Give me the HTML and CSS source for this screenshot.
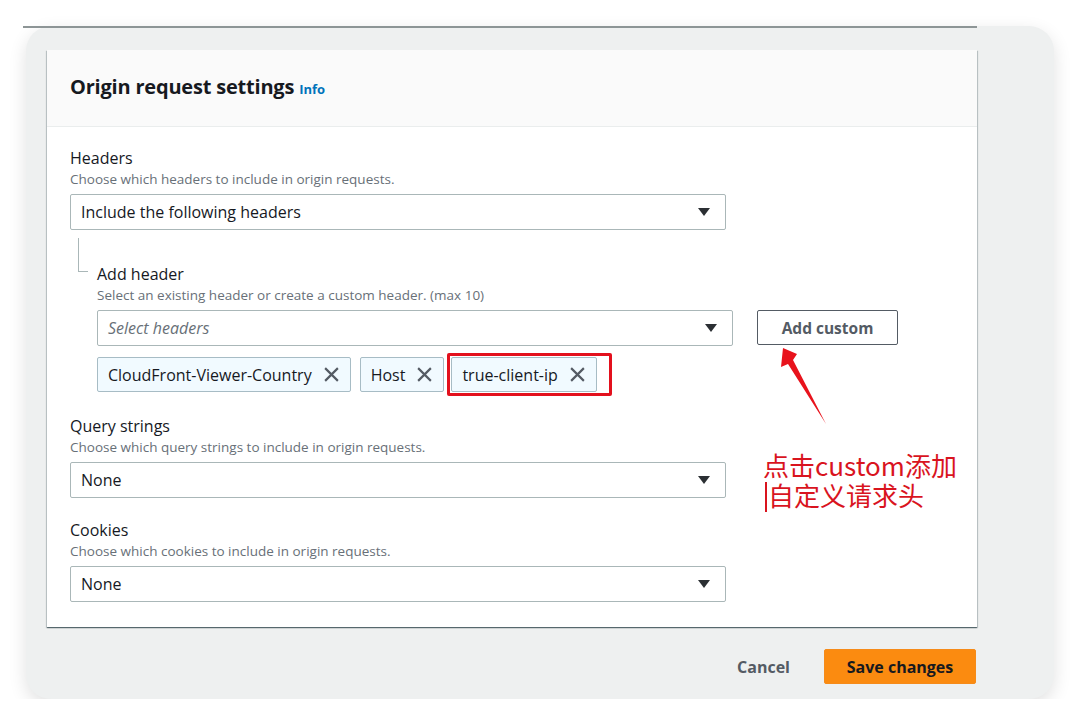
FILE: index.html
```html
<!DOCTYPE html>
<html lang="en">
<head>
    <meta charset="UTF-8">
    <title>Origin request settings</title>
    <link rel="stylesheet" href="styles.css">
</head>
<body>
    <div class="frame">
        <div class="prev-edge"></div>
        <div class="panel">
            <div class="panel-header">
                <h2>Origin request settings <a class="info-link" href="#">Info</a></h2>
            </div>
            <div class="panel-body">
                <div class="field">
                    <div class="field-label">Headers</div>
                    <div class="field-desc">Choose which headers to include in origin requests.</div>
                    <div class="select">
                        <span>Include the following headers</span>
                        <span class="caret"></span>
                    </div>
                    <div class="subsection">
                        <div class="connector"></div>
                        <div class="sub-content">
                            <div class="field-label">Add header</div>
                            <div class="field-desc">Select an existing header or create a custom header. (max 10)</div>
                            <div class="select-row">
                                <div class="select wide">
                                    <span class="placeholder">Select headers</span>
                                    <span class="caret"></span>
                                </div>
                                <button class="btn-normal">Add custom</button>
                            </div>
                            <div class="tokens">
                                <div class="token">CloudFront-Viewer-Country
                                    <svg class="dismiss" viewBox="0 0 16 16"><path d="M2 2 14 14M14 2 2 14"/></svg>
                                </div>
                                <div class="token">Host
                                    <svg class="dismiss" viewBox="0 0 16 16"><path d="M2 2 14 14M14 2 2 14"/></svg>
                                </div>
                                <div class="highlight">
                                    <div class="token">true-client-ip
                                        <svg class="dismiss" viewBox="0 0 16 16"><path d="M2 2 14 14M14 2 2 14"/></svg>
                                    </div>
                                </div>
                            </div>
                        </div>
                    </div>
                </div>
                <div class="field">
                    <div class="field-label">Query strings</div>
                    <div class="field-desc">Choose which query strings to include in origin requests.</div>
                    <div class="select">
                        <span>None</span>
                        <span class="caret"></span>
                    </div>
                </div>
                <div class="field">
                    <div class="field-label">Cookies</div>
                    <div class="field-desc">Choose which cookies to include in origin requests.</div>
                    <div class="select">
                        <span>None</span>
                        <span class="caret"></span>
                    </div>
                </div>

                <!-- screenshot annotation -->
                <svg class="note-arrow" viewBox="0 0 60 84" width="60" height="84">
                    <polygon points="8,3 22,9 18,15 51,79 13,19 6,22"/>
                </svg>
                <div class="note">
                    <div class="note-line">点击custom添加</div>
                    <div class="note-line"><span class="cursor"></span>自定义请求头</div>
                </div>
            </div>
        </div>
        <div class="footer">
            <button class="btn-link">Cancel</button>
            <button class="btn-primary">Save changes</button>
        </div>
    </div>
</body>
</html>
```

FILE: styles.css
```css
body {
    margin: 0;
    background-color: #fff;
    font-family: 'Open Sans', 'Noto Sans', sans-serif;
    color: #16191f;
}
.frame {
    width: 1028px;
    margin: 26px 0 0 26px;
    padding: 0 77px 15px 21px;
    box-sizing: border-box;
    background-color: #eef0f0;
    border-radius: 25px;
    box-shadow: 0 6px 18px rgba(0,0,0,0.12);
}
.prev-edge { /* bottom edge of the panel above */
    height: 2px;
    width: 954px;
    margin-left: -24px;
    background-color: #8d9596;
}
.panel {
    margin-top: 22px;
    background-color: #fff;
    box-shadow: 0 1px 1px 0 rgba(0,28,36,0.5), 1px 1px 1px 0 rgba(0,28,36,0.15), -1px 1px 1px 0 rgba(0,28,36,0.15);
}
.panel-header {
    background-color: #fafafa;
    height: 77px;
    padding: 0 23px 4px;
    display: flex;
    align-items: center;
    border-bottom: 1px solid #eaeded;
    box-sizing: border-box;
}
.panel-header h2 {
    margin: 0;
    font-size: 20px;
    font-weight: 700;
    letter-spacing: -0.2px;
}
.info-link {
    font-size: 13px;
    font-weight: 700;
    color: #0073bb;
    text-decoration: none;
    letter-spacing: 0;
}
.panel-body {
    position: relative;
    padding: 20px 23px 25px;
}
.field + .field {
    margin-top: 21px;
}
.field-label {
    font-size: 16px;
    line-height: 22px;
}
.field-desc {
    font-size: 13.5px;
    line-height: 20px;
    color: #687078;
    margin-bottom: 5px;
}
.select {
    width: 656px;
    height: 36px;
    box-sizing: border-box;
    border: 1px solid #aab7b8;
    border-radius: 2px;
    display: flex;
    align-items: center;
    justify-content: space-between;
    padding: 0 15px 0 10px;
    font-size: 16px;
}
.select.wide {
    width: 636px;
}
.placeholder {
    font-style: italic;
    color: #687078;
}
.caret {
    width: 0;
    height: 0;
    border-left: 6px solid transparent;
    border-right: 6px solid transparent;
    border-top: 8px solid #2b2f33;
}
.subsection {
    display: flex;
    padding-left: 8px;
}
.connector {
    width: 10px;
    height: 34px;
    margin-top: 8px;
    border-left: 1px solid #aab7b8;
    border-bottom: 1px solid #aab7b8;
    box-sizing: border-box;
}
.sub-content {
    padding-top: 33px;
    margin-left: 9px;
}
.select-row {
    display: flex;
    align-items: center;
    gap: 24px;
}
.btn-normal {
    width: 141px;
    height: 35px;
    margin-top: -1px;
    background-color: #fff;
    border: 1px solid #545b64;
    border-radius: 2px;
    font-family: inherit;
    font-size: 15.5px;
    font-weight: 700;
    color: #545b64;
}
.tokens {
    display: flex;
    gap: 9px;
    margin-top: 11px;
    margin-bottom: 2px;
}
.token {
    height: 35px;
    box-sizing: border-box;
    display: flex;
    align-items: center;
    gap: 11px;
    padding: 0 10px 0 10px;
    background-color: #f1faff;
    border: 1px solid #a7bcc5;
    border-radius: 2px;
    font-size: 16px;
}
.dismiss {
    width: 17px;
    height: 17px;
    fill: none;
    stroke: #545b64;
    stroke-width: 2;
}
.highlight {
    margin: -4px 0 -4px -6px;
    padding: 1px 12px 1px 1px;
    border: 3px solid #e3101d;
    border-radius: 2px;
}
.note-arrow {
    position: absolute;
    left: 728px;
    top: 218px;
    fill: #e8131c;
}
.note {
    position: absolute;
    left: 716px;
    top: 323px;
    font-family: 'Noto Sans CJK SC', sans-serif;
    font-size: 26px;
    color: #d9141e;
    white-space: nowrap;
}
.note-line {
    height: 30px;
    line-height: 30px;
}
.cursor {
    display: inline-block;
    width: 2px;
    height: 30px;
    margin: 0 1px 0 2px;
    vertical-align: -6px;
    background-color: #d9141e;
}
.footer {
    display: flex;
    justify-content: flex-end;
    align-items: center;
    gap: 14px;
    margin-top: 22px;
}
.btn-link {
    background: none;
    border: none;
    padding: 4px 20px;
    font-family: inherit;
    font-size: 16px;
    font-weight: 700;
    color: #545b64;
}
.btn-primary {
    width: 152px;
    height: 35px;
    margin-right: 1px;
    background-color: #fb8b10;
    border: 1px solid #f58b1a;
    border-radius: 2px;
    font-family: inherit;
    font-size: 16px;
    font-weight: 700;
    color: #16191f;
}
```
